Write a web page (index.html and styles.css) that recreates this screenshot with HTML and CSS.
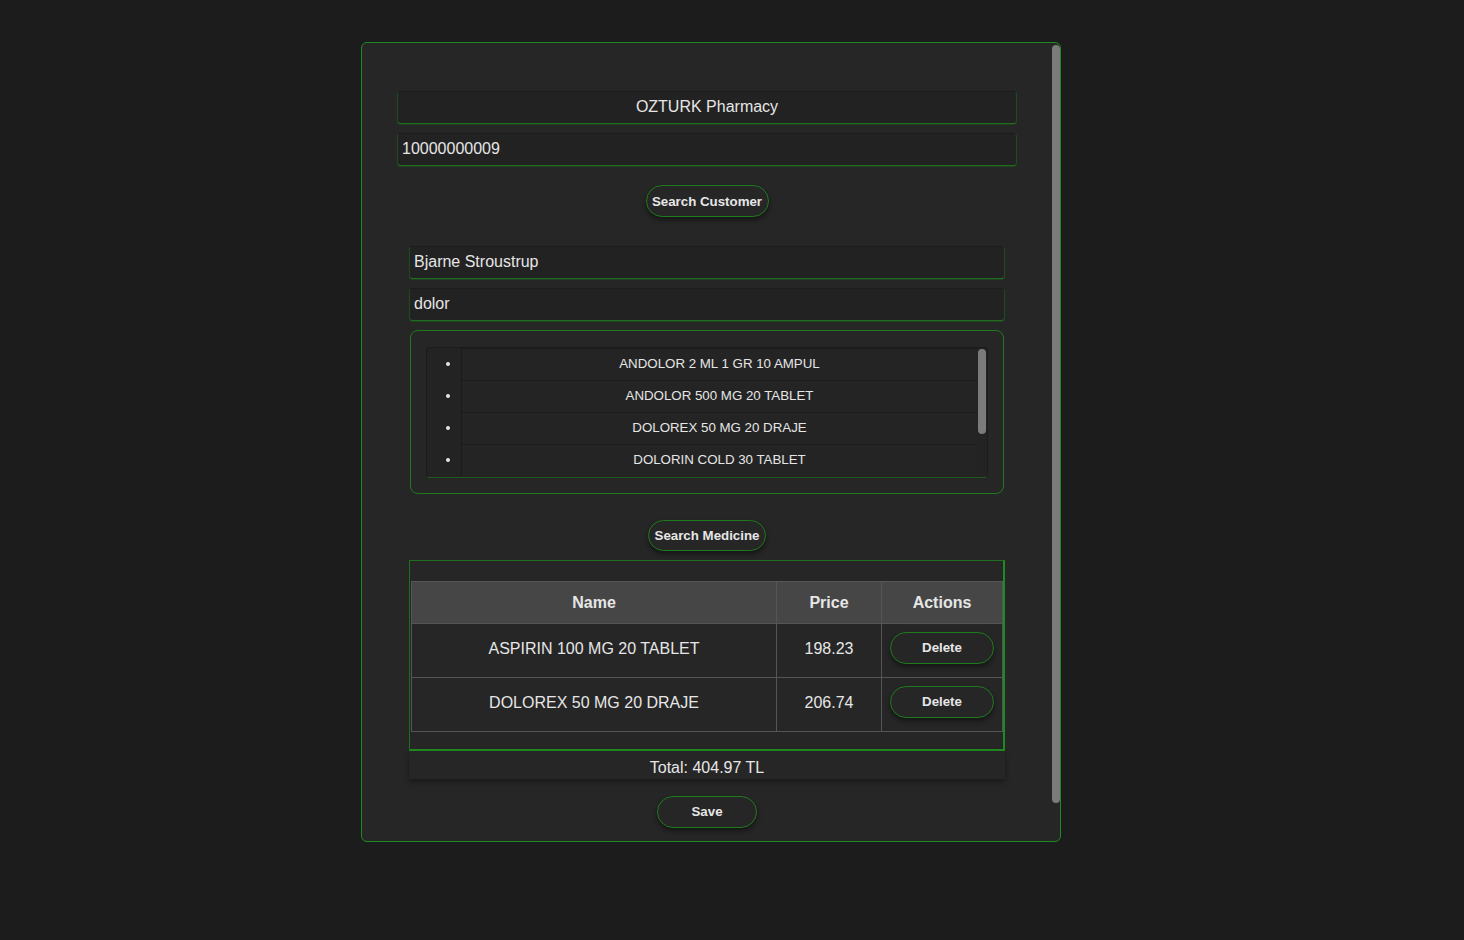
FILE: index.html
```html
<!DOCTYPE html>
<html>
<head>
<meta charset="utf-8">
<link rel="stylesheet" href="styles.css">
</head>
<body>
<div class="page">
  <div class="card">
    <div class="card-body">
      <div class="field center">OZTURK Pharmacy</div>
      <div class="field">10000000009</div>
      <div class="btn-row"><button class="btn btn-search-customer">Search Customer</button></div>
      <div class="section">
        <div class="field">Bjarne Stroustrup</div>
        <div class="field">dolor</div>
        <div class="results">
          <div class="list-wrap">
            <ul class="med-list">
              <li>ANDOLOR 2 ML 1 GR 10 AMPUL</li>
              <li>ANDOLOR 500 MG 20 TABLET</li>
              <li>DOLOREX 50 MG 20 DRAJE</li>
              <li>DOLORIN COLD 30 TABLET</li>
            </ul>
            <div class="list-thumb"></div>
          </div>
        </div>
        <div class="btn-row btn-row-med"><button class="btn btn-search-med">Search Medicine</button></div>
        <div class="table-box">
          <table class="cart">
            <thead>
              <tr><th class="c-name">Name</th><th class="c-price">Price</th><th class="c-act">Actions</th></tr>
            </thead>
            <tbody>
              <tr><td class="c-txt">ASPIRIN 100 MG 20 TABLET</td><td class="c-txt">198.23</td><td class="c-btn"><button class="btn btn-del">Delete</button></td></tr>
              <tr><td class="c-txt">DOLOREX 50 MG 20 DRAJE</td><td class="c-txt">206.74</td><td class="c-btn"><button class="btn btn-del">Delete</button></td></tr>
            </tbody>
          </table>
        </div>
        <div class="total">Total: 404.97 TL</div>
      </div>
      <div class="btn-row btn-row-save"><button class="btn btn-save">Save</button></div>
    </div>
    <div class="card-thumb"></div>
  </div>
</div>
</body>
</html>
```

FILE: styles.css
```css
* { box-sizing: border-box; }
html, body { margin: 0; padding: 0; }
body {
  background: #1c1c1c;
  font-family: "Liberation Sans", Arial, sans-serif;
  color: #e6e6e6;
  width: 1464px;
  height: 940px;
  overflow: hidden;
}
.page {
  padding: 42px 0 0 361px;
}
.card {
  position: relative;
  width: 700px;
  height: 800px;
  background: #262626;
  border: 1px solid #1f8a1f;
  border-radius: 6px;
  overflow: hidden;
}
.card-body {
  padding: 48px 43px 0 35px;
  display: flex;
  flex-direction: column;
}
.card-thumb {
  position: absolute;
  right: 0;
  top: 2px;
  width: 8px;
  height: 758px;
  background: #7b7b7b;
  border-radius: 4px;
}
.field {
  height: 33px;
  background: #222222;
  border: 1px solid #1c1c1c;
  border-bottom-color: #1f6e1f;
  border-left-color: #1e4a1e;
  border-right-color: #1e4a1e;
  border-radius: 4px;
  box-shadow: 0 1px 1px rgba(31, 120, 31, 0.35);
  font-size: 16px;
  line-height: 29px;
  padding: 0 4px;
  margin-bottom: 9px;
  color: #e6e6e6;
}
.field.center { text-align: center; }
.btn-row {
  display: flex;
  justify-content: center;
}
.btn {
  font-family: "Liberation Sans", Arial, sans-serif;
  font-weight: bold;
  font-size: 13.3px;
  color: #e6e6e6;
  background: #262626;
  border: 1px solid #1f7a1f;
  border-radius: 16px;
  box-shadow: 0 3px 5px rgba(0, 0, 0, 0.45);
  padding: 0;
  cursor: pointer;
}
.btn-search-customer {
  width: 123px;
  height: 32px;
  margin: 10px 0 29px;
}
.section {
  padding: 0 12px;
  display: flex;
  flex-direction: column;
}
.results {
  height: 164px;
  border: 1px solid #1f7a1f;
  border-radius: 8px;
  padding: 16px 15px 16px 15px;
  margin-left: 1px;
  margin-right: 1px;
}
.list-wrap {
  position: relative;
  height: 131px;
  background: #232323;
  border: 1px solid #1c1c1c;
  border-bottom-color: #1e5a1e;
  border-radius: 4px;
  overflow: hidden;
}
.med-list {
  list-style: disc;
  margin: 0;
  padding: 0 10px 0 34px;
  color: #e6e6e6;
}
.med-list li {
  height: 32px;
  line-height: 29px;
  font-size: 13.3px;
  text-align: center;
  background: #242424;
  border-left: 1px solid #1b1b1b;
  border-top: 1px solid #1b1b1b;
  padding-left: 0;
}
.list-thumb {
  position: absolute;
  right: 1px;
  top: 1px;
  width: 8px;
  height: 85px;
  background: #7b7b7b;
  border-radius: 4px;
}
.btn-row-med { margin: 26px 0 9px; }
.btn-search-med {
  width: 118px;
  height: 31px;
}
.table-box {
  border: 1px solid #1f6e1f;
  border-right: 2px solid #1f8a1f;
  border-bottom: 2px solid #1f8a1f;
  padding: 20px 0 17px 1px;
}
.cart {
  width: 592px;
  border-collapse: collapse;
  font-size: 16px;
  color: #e6e6e6;
}
.cart th, .cart td {
  border: 1px solid #555555;
  text-align: center;
  padding: 0;
}
.cart th {
  background: #464646;
  height: 42px;
  font-weight: bold;
  line-height: 38px;
}
.cart td {
  height: 54px;
  background: #262626;
}
.cart td.c-txt {
  vertical-align: top;
  line-height: 50px;
}
.cart td.c-btn {
  vertical-align: top;
  padding-top: 8px;
}
.c-name { width: 365px; }
.c-price { width: 105px; }
.btn-del {
  display: block;
  margin: 0 auto;
  width: 104px;
  height: 32px;
  line-height: 28px;
}
.total {
  height: 28px;
  line-height: 33px;
  text-align: center;
  font-size: 16px;
  background: #262626;
  box-shadow: 0 3px 5px rgba(0, 0, 0, 0.35);
  margin-bottom: 17px;
}
.btn-save {
  width: 100px;
  height: 32px;
  line-height: 28px;
}
```
